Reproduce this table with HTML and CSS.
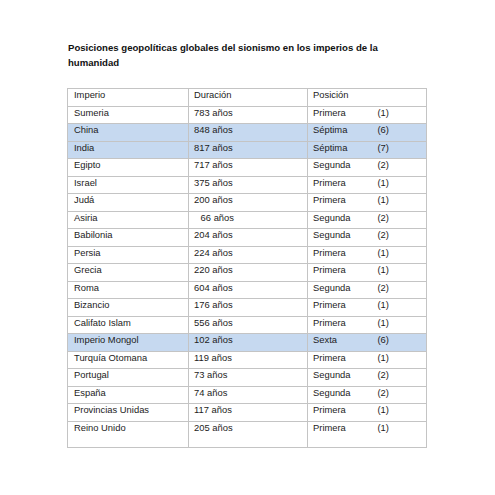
FILE: index.html
```html
<!DOCTYPE html>
<html lang="es">
<head>
<meta charset="utf-8">
<title>Posiciones geopolíticas</title>
<link rel="stylesheet" href="styles.css">
</head>
<body>
<div class="page">
  <h1 class="title">Posiciones geopolíticas globales del sionismo en los imperios de la humanidad</h1>
  <table class="grid">
    <colgroup><col class="c1"><col class="c2"><col class="c3"></colgroup>
    <tbody>
      <tr><td>Imperio</td><td>Duración</td><td>Posición</td></tr>
      <tr><td>Sumeria</td><td>783 años</td><td><span class="pos">Primera</span>(1)</td></tr>
      <tr class="hl"><td>China</td><td>848 años</td><td><span class="pos">Séptima</span>(6)</td></tr>
      <tr class="hl"><td>India</td><td>817 años</td><td><span class="pos">Séptima</span>(7)</td></tr>
      <tr><td>Egipto</td><td>717 años</td><td><span class="pos">Segunda</span>(2)</td></tr>
      <tr><td>Israel</td><td>375 años</td><td><span class="pos">Primera</span>(1)</td></tr>
      <tr><td>Judá</td><td>200 años</td><td><span class="pos">Primera</span>(1)</td></tr>
      <tr><td>Asiria</td><td><span class="indent">66 años</span></td><td><span class="pos">Segunda</span>(2)</td></tr>
      <tr><td>Babilonia</td><td>204 años</td><td><span class="pos">Segunda</span>(2)</td></tr>
      <tr><td>Persia</td><td>224 años</td><td><span class="pos">Primera</span>(1)</td></tr>
      <tr><td>Grecia</td><td>220 años</td><td><span class="pos">Primera</span>(1)</td></tr>
      <tr><td>Roma</td><td>604 años</td><td><span class="pos">Segunda</span>(2)</td></tr>
      <tr><td>Bizancio</td><td>176 años</td><td><span class="pos">Primera</span>(1)</td></tr>
      <tr><td>Califato Islam</td><td>556 años</td><td><span class="pos">Primera</span>(1)</td></tr>
      <tr class="hl"><td>Imperio Mongol</td><td>102 años</td><td><span class="pos">Sexta</span>(6)</td></tr>
      <tr><td>Turquía Otomana</td><td>119 años</td><td><span class="pos">Primera</span>(1)</td></tr>
      <tr><td>Portugal</td><td>73 años</td><td><span class="pos">Segunda</span>(2)</td></tr>
      <tr><td>España</td><td>74 años</td><td><span class="pos">Segunda</span>(2)</td></tr>
      <tr><td>Provincias Unidas</td><td>117 años</td><td><span class="pos">Primera</span>(1)</td></tr>
      <tr class="last"><td>Reino Unido</td><td>205 años</td><td><span class="pos">Primera</span>(1)</td></tr>
    </tbody>
  </table>
</div>
</body>
</html>
```
FILE: styles.css
```css
html, body {
  margin: 0;
  padding: 0;
  background: #ffffff;
}
body {
  font-family: "Liberation Sans", Arial, sans-serif;
  color: #1c1c1c;
}
.page {
  padding: 40px 0 0 67px;
}
.title {
  margin: 0 0 18px 1px;
  width: 340px;
  font-size: 9.6px;
  line-height: 15px;
  font-weight: bold;
  color: #111;
}
.grid {
  border-collapse: collapse;
  table-layout: fixed;
  width: 359px;
  font-size: 9.4px;
}
.c1 { width: 121px; }
.c2 { width: 119px; }
.c3 { width: 119px; }
.grid td {
  border: 1px solid #c4c4c4;
  height: 17.53px;
  box-sizing: border-box;
  padding: 0 5px;
  vertical-align: top;
  line-height: 11px;
  white-space: nowrap;
}
.grid td:first-child {
  padding-left: 6px;
}
.grid tr.hl td {
  background: #c6d9f0;
}
.grid tr.last td {
  height: 26px;
}
.pos {
  display: inline-block;
  width: 64.5px;
}
.indent {
  padding-left: 6.6px;
}
```
